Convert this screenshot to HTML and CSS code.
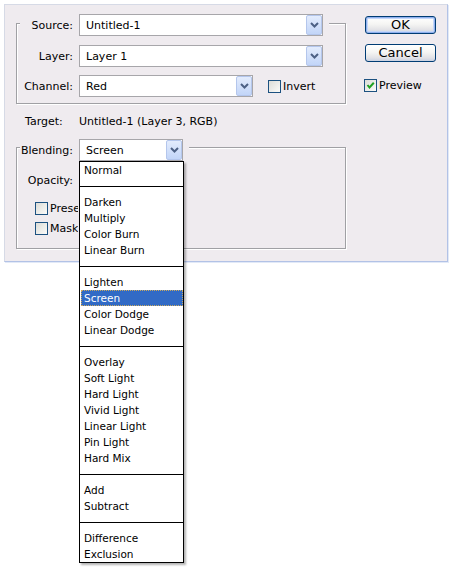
FILE: index.html
```html
<!DOCTYPE html>
<html>
<head>
<meta charset="utf-8">
<link rel="stylesheet" href="styles.css">
</head>
<body>
<div class="dialog">
  <div class="main">
    <div class="group g1">
      <div class="row first">
        <span class="lbl">Source:</span>
        <div class="combo w-long"><span class="val">Untitled-1</span><span class="dd"><svg width="9" height="6" viewBox="0 0 9 6"><path d="M1 1 L4.5 4.5 L8 1" fill="none" stroke="#4d6185" stroke-width="2"/></svg></span></div>
      </div>
      <div class="row second">
        <span class="lbl">Layer:</span>
        <div class="combo w-long"><span class="val">Layer 1</span><span class="dd"><svg width="9" height="6" viewBox="0 0 9 6"><path d="M1 1 L4.5 4.5 L8 1" fill="none" stroke="#4d6185" stroke-width="2"/></svg></span></div>
      </div>
      <div class="row third">
        <span class="lbl">Channel:</span>
        <div class="combo w-mid"><span class="val">Red</span><span class="dd"><svg width="9" height="6" viewBox="0 0 9 6"><path d="M1 1 L4.5 4.5 L8 1" fill="none" stroke="#4d6185" stroke-width="2"/></svg></span></div>
        <label class="check invert"><span class="box"></span>Invert</label>
      </div>
    </div>
    <div class="target"><span class="tlbl">Target:</span><span>Untitled-1 (Layer 3, RGB)</span></div>
    <div class="group g2">
      <div class="row first-b">
        <span class="lbl">Blending:</span>
        <div class="combo w-short"><span class="val">Screen</span><span class="dd"><svg width="9" height="6" viewBox="0 0 9 6"><path d="M1 1 L4.5 4.5 L8 1" fill="none" stroke="#4d6185" stroke-width="2"/></svg></span>
          <ul class="list">
            <li>Normal</li>
            <li class="sep"></li>
            <li>Darken</li>
            <li>Multiply</li>
            <li>Color Burn</li>
            <li>Linear Burn</li>
            <li class="sep"></li>
            <li>Lighten</li>
            <li class="sel">Screen</li>
            <li>Color Dodge</li>
            <li>Linear Dodge</li>
            <li class="sep"></li>
            <li>Overlay</li>
            <li>Soft Light</li>
            <li>Hard Light</li>
            <li>Vivid Light</li>
            <li>Linear Light</li>
            <li>Pin Light</li>
            <li>Hard Mix</li>
            <li class="sep"></li>
            <li>Add</li>
            <li>Subtract</li>
            <li class="sep"></li>
            <li>Difference</li>
            <li>Exclusion</li>
          </ul>
        </div>
      </div>
      <div class="row opacity"><span class="lbl">Opacity:</span></div>
      <label class="check preserve"><span class="box"></span><span class="clip">Preserve Transparency</span></label>
      <label class="check mask"><span class="box"></span><span class="clip">Mask...</span></label>
    </div>
  </div>
  <div class="side">
    <button class="btn ok">OK</button>
    <button class="btn cancel">Cancel</button>
    <label class="check preview"><span class="box"><svg width="11" height="11" viewBox="0 0 11 11"><path d="M2.5 5 L4.5 7.5 L8.8 2.8" fill="none" stroke="#21a121" stroke-width="2"/></svg></span>Preview</label>
  </div>
</div>
</body>
</html>
```
FILE: styles.css
```css
html {
  height: 100%;
  background: #fff;
}

body {
  box-sizing: border-box;
  min-height: 569px;
  margin: 0;
  padding-top: 4px;
  background: #fff;
  font: 11px "DejaVu Sans", sans-serif;
  color: #000;
}

.dialog {
  display: flex;
  box-sizing: border-box;
  width: 444px;
  height: 258px;
  margin: 0 0 0 4px;
  padding: 11px 0 0 11px;
  background: #efebef;
  border: 1px solid #d6dae6;
  border-right-color: #b2c2e6;
  border-bottom-color: #b2c2e6;
  box-shadow: 1px 1px 0 #e2e9f7;
}

.main {
  display: flex;
  flex-direction: column;
  align-items: flex-start;
  width: 331px;
  padding-top: 7px;
}

.group {
  display: flex;
  flex-direction: column;
  align-items: flex-start;
  box-sizing: border-box;
  width: 330px;
  border: 1px solid #a0a0a4;
  box-shadow: inset 1px 1px 0 #fff, 1px 1px 0 #fff;
}

.g1 {
  padding: 0 0 6px 3px;
}

.g2 {
  margin-top: 17px;
  padding: 0 0 13px 3px;
}

.row {
  display: flex;
  align-items: center;
  height: 22px;
  padding-right: 6px;
  background: #efebef;
}

.row.first { margin-top: -10px; }
.row.second { margin-top: 9px; }
.row.third { margin-top: 8px; padding-right: 0; }
.row.first-b { margin-top: -9px; }
.row.opacity { margin-top: 8px; }

.lbl {
  box-sizing: border-box;
  width: 59px;
  padding-right: 6px;
  text-align: right;
}

.combo {
  position: relative;
  display: flex;
  align-items: center;
  box-sizing: border-box;
  height: 22px;
  border: 1px solid #a7a6aa;
  background: #fff;
}

.w-long { width: 244px; }
.w-mid { width: 174px; }
.w-short { width: 104px; }

.combo .val {
  flex: 1;
  padding-left: 6px;
  white-space: nowrap;
}

.dd {
  display: flex;
  align-items: center;
  justify-content: center;
  box-sizing: border-box;
  width: 16px;
  height: 20px;
  border: 1px solid #b4c6ec;
  border-radius: 2px;
  background: linear-gradient(#e3ecfd, #c2d5f8);
}

.check {
  display: flex;
  align-items: center;
  height: 13px;
  line-height: 13px;
  white-space: nowrap;
}

.box {
  display: flex;
  box-sizing: border-box;
  flex: none;
  width: 13px;
  height: 13px;
  margin-right: 2px;
  border: 1px solid #1c5180;
  background: linear-gradient(135deg, #dcdcd7, #fbfbf9);
}

.clip {
  display: block;
  width: 28px;
  overflow: hidden;
}

.invert { margin-left: 15px; }
.preserve { margin: 11px 0 0 15px; }
.mask { margin: 7px 0 0 15px; }

.target {
  display: flex;
  margin: 10px 0 0 9px;
  line-height: 16px;
}

.tlbl { width: 54px; }

.side {
  display: flex;
  flex-direction: column;
  align-items: flex-start;
  margin-left: 17px;
}

.btn {
  box-sizing: border-box;
  width: 71px;
  height: 18px;
  margin: 0 0 0 1px;
  padding: 0;
  border: 1px solid #003c74;
  border-radius: 3px;
  background: linear-gradient(#ffffff 0%, #f5f5f3 45%, #e2e2e6 80%, #c9d1e2 100%);
  font: 13px/16px "DejaVu Sans", sans-serif;
  color: #000;
}

.ok {
  box-shadow: inset 0 0 0 1px #8fb0ee, inset 0 0 0 2px #c5d7f8;
}

.cancel { margin-top: 10px; }

.preview { margin-top: 17px; }

.list {
  position: absolute;
  top: 21px;
  left: -1px;
  z-index: 2;
  box-sizing: border-box;
  width: 105px;
  margin: 0;
  padding: 0;
  list-style: none;
  border: 1px solid #000;
  background: #fff;
  box-shadow: 2px 2px 2px rgba(0, 0, 0, 0.3);
  font-size: 10.5px;
}

.list li {
  height: 16px;
  padding-left: 4px;
  line-height: 16px;
  white-space: nowrap;
}

.list li.sel {
  margin-left: 1px;
  padding-left: 3px;
  background: #316ac5;
  color: #fff;
  outline: 1px dotted #c9a95e;
  outline-offset: -1px;
}

.list li.sep {
  height: 1px;
  margin: 8px 0 7px;
  padding: 0;
  background: #000;
}
```
